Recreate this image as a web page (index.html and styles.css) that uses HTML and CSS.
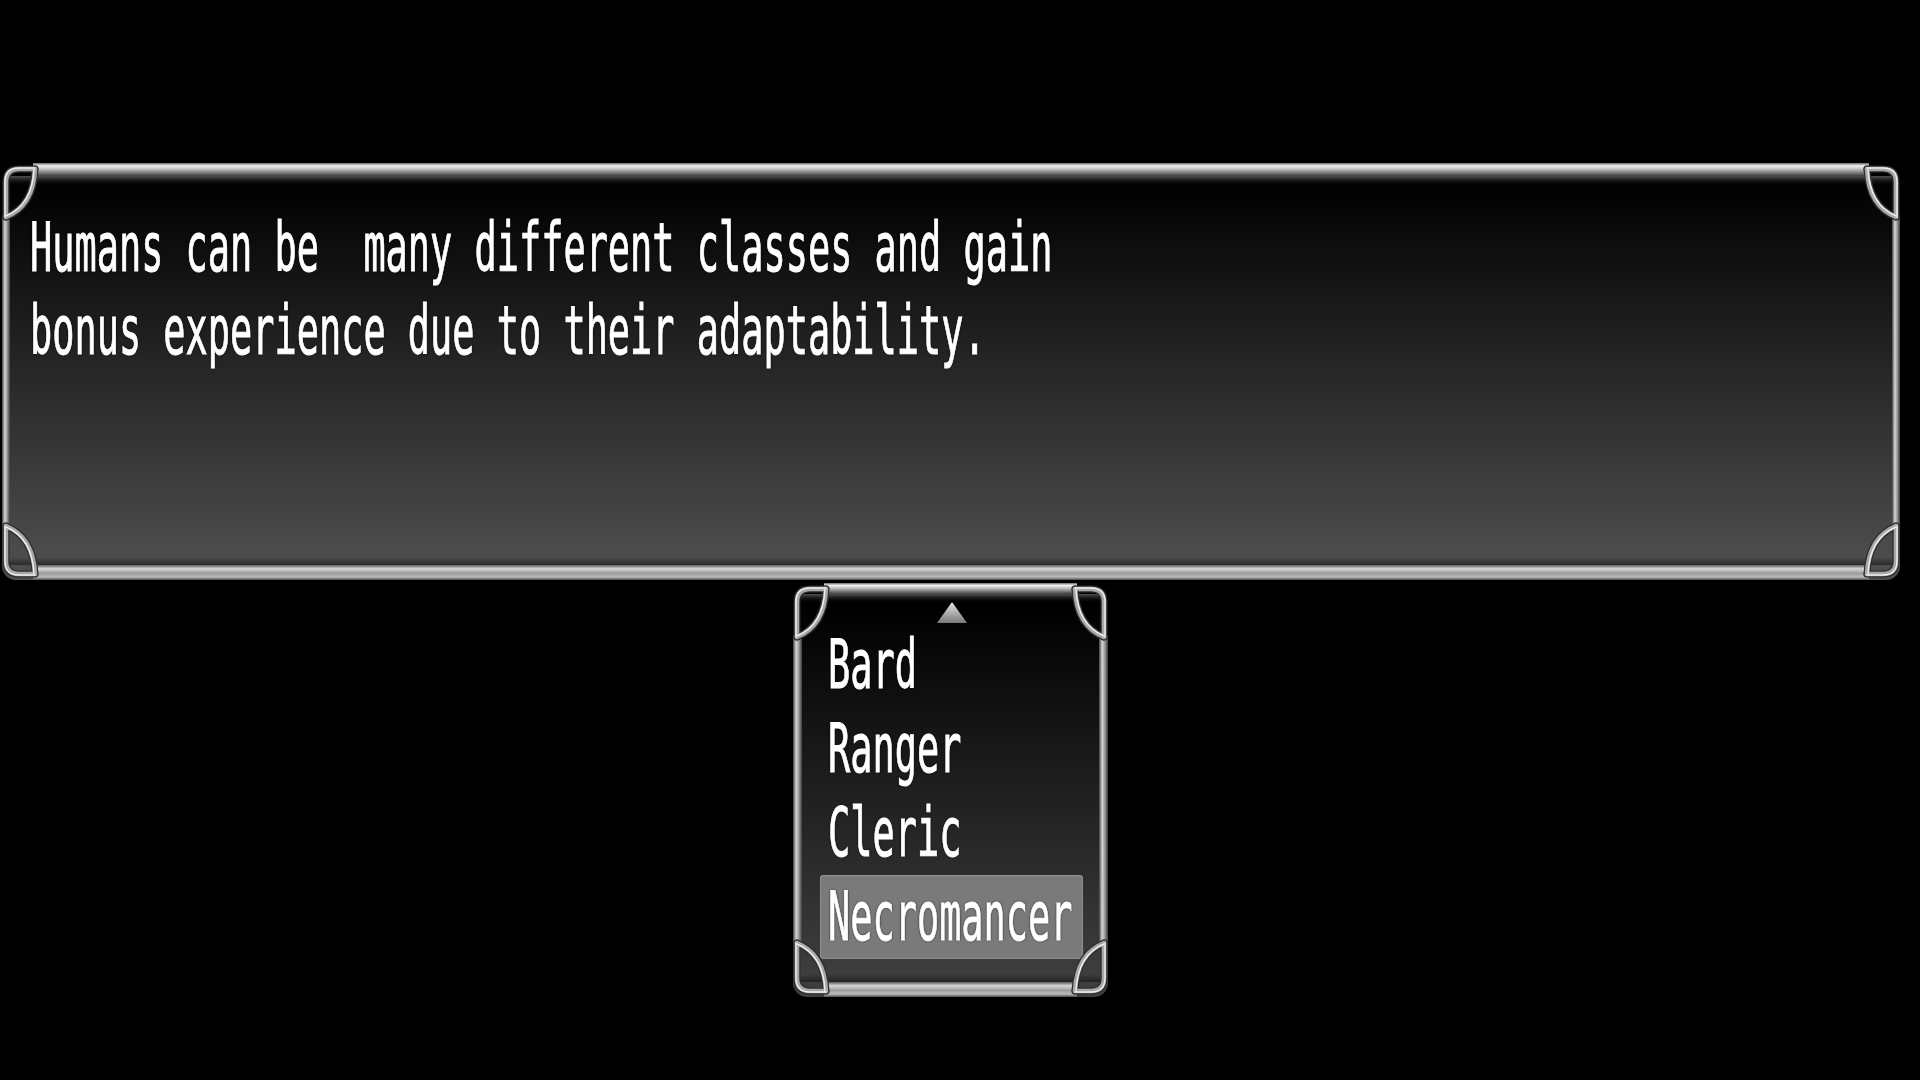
FILE: index.html
```html
<!DOCTYPE html>
<html lang="en">
<head>
<meta charset="utf-8">
<title>Class Select</title>
<link rel="stylesheet" href="styles.css">
</head>
<body>
<svg class="defs" width="0" height="0" aria-hidden="true">
  <defs>
    <linearGradient id="tubeH" x1="0" y1="0" x2="0" y2="1">
      <stop offset="0" stop-color="#6a6a6a"/>
      <stop offset="0.22" stop-color="#f2f2f2"/>
      <stop offset="0.45" stop-color="#c4c4c4"/>
      <stop offset="0.75" stop-color="#7c7c7c"/>
      <stop offset="1" stop-color="#3e3e3e"/>
    </linearGradient>
    <linearGradient id="tubeHB" x1="0" y1="0" x2="0" y2="1">
      <stop offset="0" stop-color="#5a5a5a"/>
      <stop offset="0.25" stop-color="#d8d8d8"/>
      <stop offset="0.55" stop-color="#9c9c9c"/>
      <stop offset="0.8" stop-color="#bcbcbc"/>
      <stop offset="1" stop-color="#4a4a4a"/>
    </linearGradient>
    <linearGradient id="tubeV" x1="0" y1="0" x2="1" y2="0">
      <stop offset="0" stop-color="#3c3c3c"/>
      <stop offset="0.35" stop-color="#d6d6d6"/>
      <stop offset="0.65" stop-color="#9a9a9a"/>
      <stop offset="1" stop-color="#3a3a3a"/>
    </linearGradient>
    <linearGradient id="glowTop" x1="0" y1="0" x2="0" y2="1">
      <stop offset="0" stop-color="#5a5a5a" stop-opacity="0.9"/>
      <stop offset="1" stop-color="#000" stop-opacity="0"/>
    </linearGradient>
    <linearGradient id="shadeBottom" x1="0" y1="0" x2="0" y2="1">
      <stop offset="0" stop-color="#000" stop-opacity="0"/>
      <stop offset="1" stop-color="#000" stop-opacity="0.45"/>
    </linearGradient>
    <linearGradient id="arrow" x1="0" y1="0" x2="0" y2="1">
      <stop offset="0" stop-color="#e6e6e6"/>
      <stop offset="1" stop-color="#7a7a7a"/>
    </linearGradient>
    <!-- ornamental corner loop, drawn for the top-left and mirrored for the rest -->
    <g id="corner" fill="none" stroke-linecap="round">
      <path d="M33 6 H17 Q4 6 4 19 V54" stroke="#2e2e2e" stroke-width="7"/>
      <path d="M33 6 C32 28 24 46 4 54" stroke="#2e2e2e" stroke-width="7"/>
      <path d="M33 6 H17 Q4 6 4 19 V54" stroke="#a8a8a8" stroke-width="4.5"/>
      <path d="M33 6 C32 28 24 46 4 54" stroke="#a8a8a8" stroke-width="4.5"/>
      <path d="M33 5 H17 Q3 5 3 19 V54" stroke="#eeeeee" stroke-width="1.4"/>
      <path d="M32 6 C31 28 23 45 4 53" stroke="#eeeeee" stroke-width="1.4"/>
    </g>
  </defs>
</svg>

<main class="scene">
  <section class="window message">
    <div class="text">
      <div class="line">Humans can be  many different classes and gain</div>
      <div class="line">bonus experience due to their adaptability.</div>
    </div>
    <svg class="frame" width="1898" height="417" viewBox="0 0 1898 417" aria-hidden="true">
      <rect x="8" y="13" width="1882" height="10" fill="url(#glowTop)"/>
      <rect x="8" y="394" width="1882" height="8" fill="url(#shadeBottom)"/>
      <rect x="31" y="0" width="1836" height="13" fill="url(#tubeH)"/>
      <rect x="31" y="402" width="1836" height="15" fill="url(#tubeHB)"/>
      <rect x="0" y="52" width="8" height="313" fill="url(#tubeV)"/>
      <rect x="1890" y="52" width="8" height="313" fill="url(#tubeV)"/>
      <use href="#corner"/>
      <use href="#corner" transform="translate(1898 0) scale(-1 1)"/>
      <use href="#corner" transform="translate(0 417) scale(1 -1)"/>
      <use href="#corner" transform="translate(1898 417) scale(-1 -1)"/>
    </svg>
  </section>

  <section class="window choices">
    <ul class="list">
      <li class="item"><span class="label">Bard</span></li>
      <li class="item"><span class="label">Ranger</span></li>
      <li class="item"><span class="label">Cleric</span></li>
      <li class="item selected"><span class="label">Necromancer</span></li>
    </ul>
    <svg class="frame" width="315" height="414" viewBox="0 0 315 414" aria-hidden="true">
      <rect x="8" y="11" width="299" height="9" fill="url(#glowTop)"/>
      <rect x="8" y="391" width="299" height="8" fill="url(#shadeBottom)"/>
      <rect x="31" y="0" width="253" height="11" fill="url(#tubeH)"/>
      <rect x="31" y="399" width="253" height="15" fill="url(#tubeHB)"/>
      <rect x="0" y="52" width="9" height="310" fill="url(#tubeV)"/>
      <rect x="306" y="52" width="9" height="310" fill="url(#tubeV)"/>
      <use href="#corner"/>
      <use href="#corner" transform="translate(315 0) scale(-1 1)"/>
      <use href="#corner" transform="translate(0 414) scale(1 -1)"/>
      <use href="#corner" transform="translate(315 414) scale(-1 -1)"/>
      <polygon points="144,40 159,19 174,40" fill="url(#arrow)"/>
    </svg>
  </section>
</main>
</body>
</html>
```

FILE: styles.css
```css
html, body {
  margin: 0;
  padding: 0;
  background: #000;
}

body {
  width: 1920px;
  height: 1080px;
  overflow: hidden;
  color: #fff;
  font-family: "DejaVu Sans Mono", "Liberation Mono", monospace;
}

.defs {
  display: block;
}

.scene {
  padding-top: 163px;
}

.window {
  position: relative;
  box-sizing: border-box;
}

.frame {
  position: absolute;
  left: 0;
  top: 0;
  pointer-events: none;
  overflow: visible;
}

/* message box across the top */
.message {
  margin-left: 2px;
  width: 1898px;
  height: 417px;
  padding: 44px 0 0 28px;
  border-radius: 14px;
  background: linear-gradient(to bottom, #000 4%, #4d4d4d 95%);
}

.text {
  transform: scaleX(0.551);
  transform-origin: 0 0;
}

.line {
  font-size: 67px;
  line-height: 83px;
  white-space: pre;
  -webkit-text-stroke: 1px #fff;
  text-shadow: 0 0 3px rgba(0, 0, 0, 0.9), 0 0 1px #000;
}

/* class choice list */
.choices {
  margin: 3px 0 0 793px;
  width: 315px;
  height: 414px;
  padding: 40px 0 0 27px;
  border-radius: 14px;
  background: linear-gradient(to bottom, #000 5%, #3e3e3e 95%);
}

.list {
  list-style: none;
  margin: 0;
  padding: 0;
}

.item {
  box-sizing: border-box;
  width: 263px;
  height: 84px;
  padding-left: 8px;
  border-radius: 4px;
  font-size: 67px;
  line-height: 84px;
  white-space: pre;
}

.item.selected {
  background: #7a7a7a;
  box-shadow: inset 0 0 0 1px #8e8e8e, inset 0 2px 0 #858585;
}

.label {
  display: inline-block;
  transform: scaleX(0.551);
  transform-origin: 0 50%;
  -webkit-text-stroke: 1px #fff;
  text-shadow: 0 0 3px rgba(0, 0, 0, 0.9), 0 0 1px #000;
}
```
